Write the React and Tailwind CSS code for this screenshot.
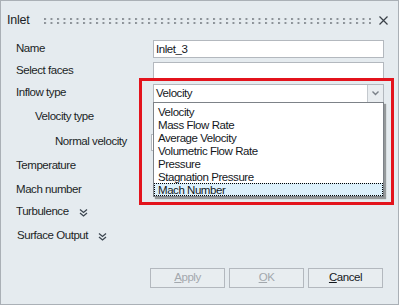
import React from "react";

const font = { fontFamily: '"Liberation Sans", Arial, sans-serif' };

const options = [
  "Velocity",
  "Mass Flow Rate",
  "Average Velocity",
  "Volumetric Flow Rate",
  "Pressure",
  "Stagnation Pressure",
  "Mach Number",
];

const DoubleChevron = () => (
  <svg width="9" height="9" viewBox="0 0 9 9" className="text-[#3c4650]">
    <path d="M1 1.5 L4.5 4.5 L8 1.5" fill="none" stroke="currentColor" strokeWidth="1.3" />
    <path d="M1 5 L4.5 8 L8 5" fill="none" stroke="currentColor" strokeWidth="1.3" />
  </svg>
);

const Row = ({ label, indent = "pl-[15px]", mt, children }) => (
  <div className={`flex items-center h-[18px] ${mt}`}>
    <div className={`w-[152px] shrink-0 ${indent} text-[#1b1f26]`}>{label}</div>
    {children}
  </div>
);

const Button = ({ children, disabled }) => (
  <button
    className={`w-[75px] h-[20px] border border-[#b3b8be] bg-[#e8edf0] text-[11.5px] ${
      disabled ? "text-[#a3a8ad]" : "text-[#14181d]"
    }`}
  >
    {children}
  </button>
);

export default function App() {
  return (
    <div
      className="relative w-[399px] h-[305px] bg-[#e5ebef] border border-[#aab0b6] text-[11.5px] tracking-[-0.45px] overflow-hidden"
      style={font}
    >
      {/* title bar */}
      <div className="flex items-center h-[39px] pl-[6px] pr-[10px]">
        <span className="text-[12.5px] tracking-[-0.2px] text-[#1b1f26]">Inlet</span>
        <svg className="ml-[14px] flex-1 h-[8px]" height="8">
          <defs>
            <pattern id="grip" width="6.5" height="8" patternUnits="userSpaceOnUse">
              <rect x="0" y="1" width="2" height="2" fill="#8c9298" />
              <rect x="0" y="5" width="2" height="2" fill="#8c9298" />
            </pattern>
          </defs>
          <rect width="100%" height="8" fill="url(#grip)" />
        </svg>
        <svg width="9" height="9" viewBox="0 0 9 9" className="ml-[8px]">
          <path d="M0.5 0.5 L8.5 8.5 M8.5 0.5 L0.5 8.5" stroke="#3a4148" strokeWidth="1.2" />
        </svg>
      </div>

      {/* form rows */}
      <div className="flex flex-col">
        <Row label="Name" mt="mt-0">
          <div className="w-[231px] h-[18px] bg-white border border-[#b3b8be] pl-[2px] leading-[16px] text-[#14181d]">
            Inlet_3
          </div>
        </Row>
        <Row label="Select faces" mt="mt-[4px]">
          <div className="w-[231px] h-[18px] bg-white border border-[#b3b8be]" />
        </Row>
        <Row label="Inflow type" mt="mt-[4px]">
          <div className="flex w-[231px] h-[19px] bg-white border border-[#b3b8be]">
            <div className="flex-1 pl-[2px] leading-[17px] text-[#14181d]">Velocity</div>
            <div className="w-[16px] flex items-center justify-center border-l border-[#c4c9ce] bg-[#e9edf0]">
              <svg width="7" height="5" viewBox="0 0 7 5">
                <path d="M0.5 0.5 L3.5 3.5 L6.5 0.5" fill="none" stroke="#7a8088" strokeWidth="1.4" />
              </svg>
            </div>
          </div>
        </Row>
        <Row label="Velocity type" indent="pl-[34px]" mt="mt-[6px]">
          <div className="w-[231px] h-[18px] bg-white border border-[#b3b8be]" />
        </Row>
        <Row label="Normal velocity" indent="pl-[54px]" mt="mt-[7px]">
          <div className="-ml-[2px] w-[231px] h-[17px] bg-white border border-[#b3b8be]" />
        </Row>
        <Row label="Temperature" mt="mt-[6px]" />
        <Row label="Mach number" mt="mt-[6px]" />
        <div className="flex items-center h-[18px] mt-[4px] pl-[15px] gap-[10px] text-[#1b1f26]">
          <span>Turbulence</span>
          <DoubleChevron />
        </div>
        <div className="flex items-center h-[18px] mt-[6px] pl-[16px] gap-[10px] text-[#1b1f26]">
          <span>Surface Output</span>
          <DoubleChevron />
        </div>
      </div>

      {/* buttons */}
      <div className="flex justify-end gap-[4px] pr-[15px] mt-[23px]">
        <Button disabled>
          <span className="underline">A</span>pply
        </Button>
        <Button disabled>
          <span className="underline">O</span>K
        </Button>
        <Button>
          <span className="underline">C</span>ancel
        </Button>
      </div>

      {/* open dropdown list */}
      <div className="absolute left-[152px] top-[101px] w-[231px] bg-white border border-[#7d8288] pt-[2px] shadow-[2px_2px_1px_rgba(0,0,0,0.35)]">
        {options.map((opt, i) => (
          <div
            key={opt}
            className={`h-[13px] leading-[12px] pl-[3px] text-[#14181d] ${
              i === options.length - 1
                ? "bg-[#dcf0fb] border border-dotted border-black pl-[2px]"
                : "border border-transparent"
            }`}
          >
            {opt}
          </div>
        ))}
      </div>

      {/* red annotation box */}
      <div className="absolute left-[138px] top-[77px] w-[255px] h-[127px] border-[3px] border-[#e3131c]" />
    </div>
  );
}
